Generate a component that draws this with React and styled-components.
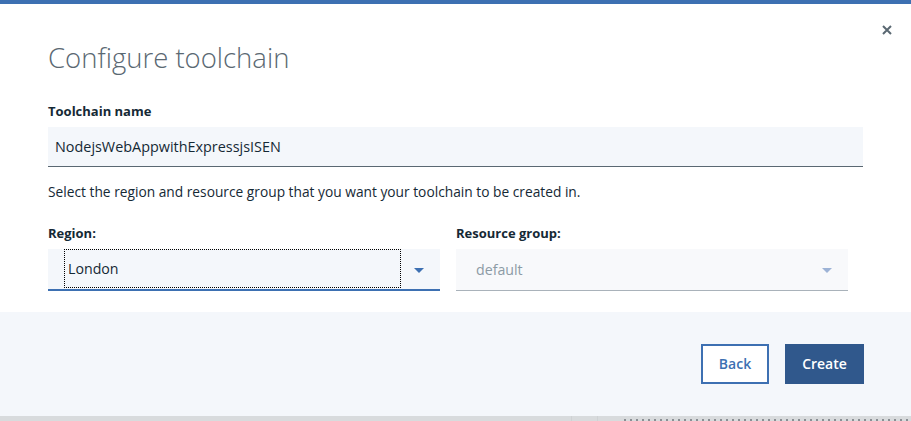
import React from "react";
import styled, { createGlobalStyle } from "styled-components";

const GlobalStyle = createGlobalStyle`
  html, body {
    margin: 0;
    padding: 0;
    background: #ffffff;
  }
  body {
    font-family: "Open Sans", "Liberation Sans", sans-serif;
    color: #152935;
  }
`;

const Page = styled.div`
  width: 911px;
  height: 421px;
  display: flex;
  flex-direction: column;
  overflow: hidden;
  background: #ffffff;
`;

const TopBar = styled.div`
  height: 4px;
  background: #3d70b2;
  flex: none;
`;

const Body = styled.div`
  padding: 0 48px 0 48px;
  height: 308px;
  flex: none;
  display: flex;
  flex-direction: column;
`;

const Header = styled.div`
  display: flex;
  justify-content: space-between;
  align-items: flex-start;
  margin-right: -31px;
`;

const Title = styled.h1`
  margin: 33px 0 0 0;
  font-size: 27.5px;
  line-height: 42px;
  font-weight: 300;
  color: #5a6872;
  letter-spacing: 0;
`;

const CloseButton = styled.button`
  margin-top: 19px;
  width: 14px;
  height: 14px;
  padding: 0;
  border: none;
  background: transparent;
  display: flex;
  align-items: center;
  justify-content: center;
  cursor: pointer;
`;

const Label = styled.div`
  font-size: 13px;
  font-weight: 700;
  line-height: 18px;
  color: #152935;
  margin-top: ${(p) => p.$top || 0}px;
`;

const TextInput = styled.div`
  margin-top: 7px;
  height: 39px;
  background: #f4f7fb;
  border-bottom: 1px solid #5a6872;
  display: flex;
  align-items: center;
  padding-left: 7px;
  font-size: 14.4px;
  color: #152935;
`;

const Hint = styled.p`
  margin: 16px 0 0 0;
  font-size: 13.75px;
  line-height: 18px;
  color: #152935;
`;

const Row = styled.div`
  display: grid;
  grid-template-columns: 392px 392px;
  column-gap: 16px;
  margin-top: 23px;
`;

const Field = styled.div`
  display: flex;
  flex-direction: column;
`;

const SelectBox = styled.div`
  margin-top: 7px;
  height: ${(p) => (p.$disabled ? 41 : 40)}px;
  background: ${(p) => (p.$disabled ? "#f8f9fb" : "#f4f7fb")};
  border-bottom: ${(p) => (p.$disabled ? "1px solid #a9b2ba" : "2px solid #3d70b2")};
  display: flex;
  align-items: center;
  padding: 0 16px 0 16px;
  box-sizing: content-box;
`;

const SelectValue = styled.div`
  flex: 1;
  height: ${(p) => (p.$focused ? "37px" : "auto")};
  border: ${(p) => (p.$focused ? "1px dotted #000" : "none")};
  display: flex;
  align-items: center;
  padding-left: ${(p) => (p.$focused ? 3 : 4)}px;
  margin-right: ${(p) => (p.$focused ? 13 : 0)}px;
  margin-top: ${(p) => (p.$focused ? "-2px" : 0)};
  font-size: 14.2px;
  color: ${(p) => (p.$disabled ? "#8c9ba5" : "#152935")};
`;

const Arrow = styled.div`
  width: 0;
  height: 0;
  border-left: 5px solid transparent;
  border-right: 5px solid transparent;
  border-top: 5px solid ${(p) => (p.$disabled ? "#9db3d6" : "#3d70b2")};
  margin-top: 2px;
`;

const Footer = styled.div`
  height: 104px;
  flex: none;
  background: #f4f7fb;
  display: flex;
  justify-content: flex-end;
  align-items: center;
  gap: 16px;
  padding-right: 47px;
`;

const Button = styled.button`
  height: 40px;
  min-width: ${(p) => (p.$primary ? 79 : 68)}px;
  padding: 0 8px;
  margin-top: -1px;
  font-family: "Open Sans", "Liberation Sans", sans-serif;
  font-size: 14px;
  font-weight: 600;
  cursor: pointer;
  border: 2px solid ${(p) => (p.$primary ? "#30588c" : "#3d70b2")};
  background: ${(p) => (p.$primary ? "#30588c" : "#ffffff")};
  color: ${(p) => (p.$primary ? "#ffffff" : "#3d70b2")};
`;

const BottomStrip = styled.div`
  flex: 1;
  background: #d8dbdd;
  display: flex;
`;

const StripCell = styled.div`
  width: ${(p) => p.$w}px;
  border-right: 1px solid #cfd2d4;
`;

const Dots = styled.div`
  flex: 1;
  margin: 3px 0 0 26px;
  height: 2px;
  background: repeating-linear-gradient(
    to right,
    #8a8f94 0,
    #8a8f94 2px,
    transparent 2px,
    transparent 6px
  );
`;

const CloseIcon = () => (
  <svg width="10" height="10" viewBox="0 0 10 10">
    <path d="M1 1 L9 9 M9 1 L1 9" stroke="#5a6872" strokeWidth="2" />
  </svg>
);

export default function App() {
  return (
    <>
      <GlobalStyle />
      <Page>
        <TopBar />
        <Body>
          <Header>
            <Title>Configure toolchain</Title>
            <CloseButton aria-label="Close">
              <CloseIcon />
            </CloseButton>
          </Header>
          <Label $top={23}>Toolchain name</Label>
          <TextInput>NodejsWebAppwithExpressjsISEN</TextInput>
          <Hint>
            Select the region and resource group that you want your toolchain to be created in.
          </Hint>
          <Row>
            <Field>
              <Label>Region:</Label>
              <SelectBox>
                <SelectValue $focused>London</SelectValue>
                <Arrow />
              </SelectBox>
            </Field>
            <Field>
              <Label>Resource group:</Label>
              <SelectBox $disabled>
                <SelectValue $disabled>default</SelectValue>
                <Arrow $disabled />
              </SelectBox>
            </Field>
          </Row>
        </Body>
        <Footer>
          <Button>Back</Button>
          <Button $primary>Create</Button>
        </Footer>
        <BottomStrip>
          <StripCell $w={571} />
          <StripCell $w={25} />
          <Dots />
        </BottomStrip>
      </Page>
    </>
  );
}
